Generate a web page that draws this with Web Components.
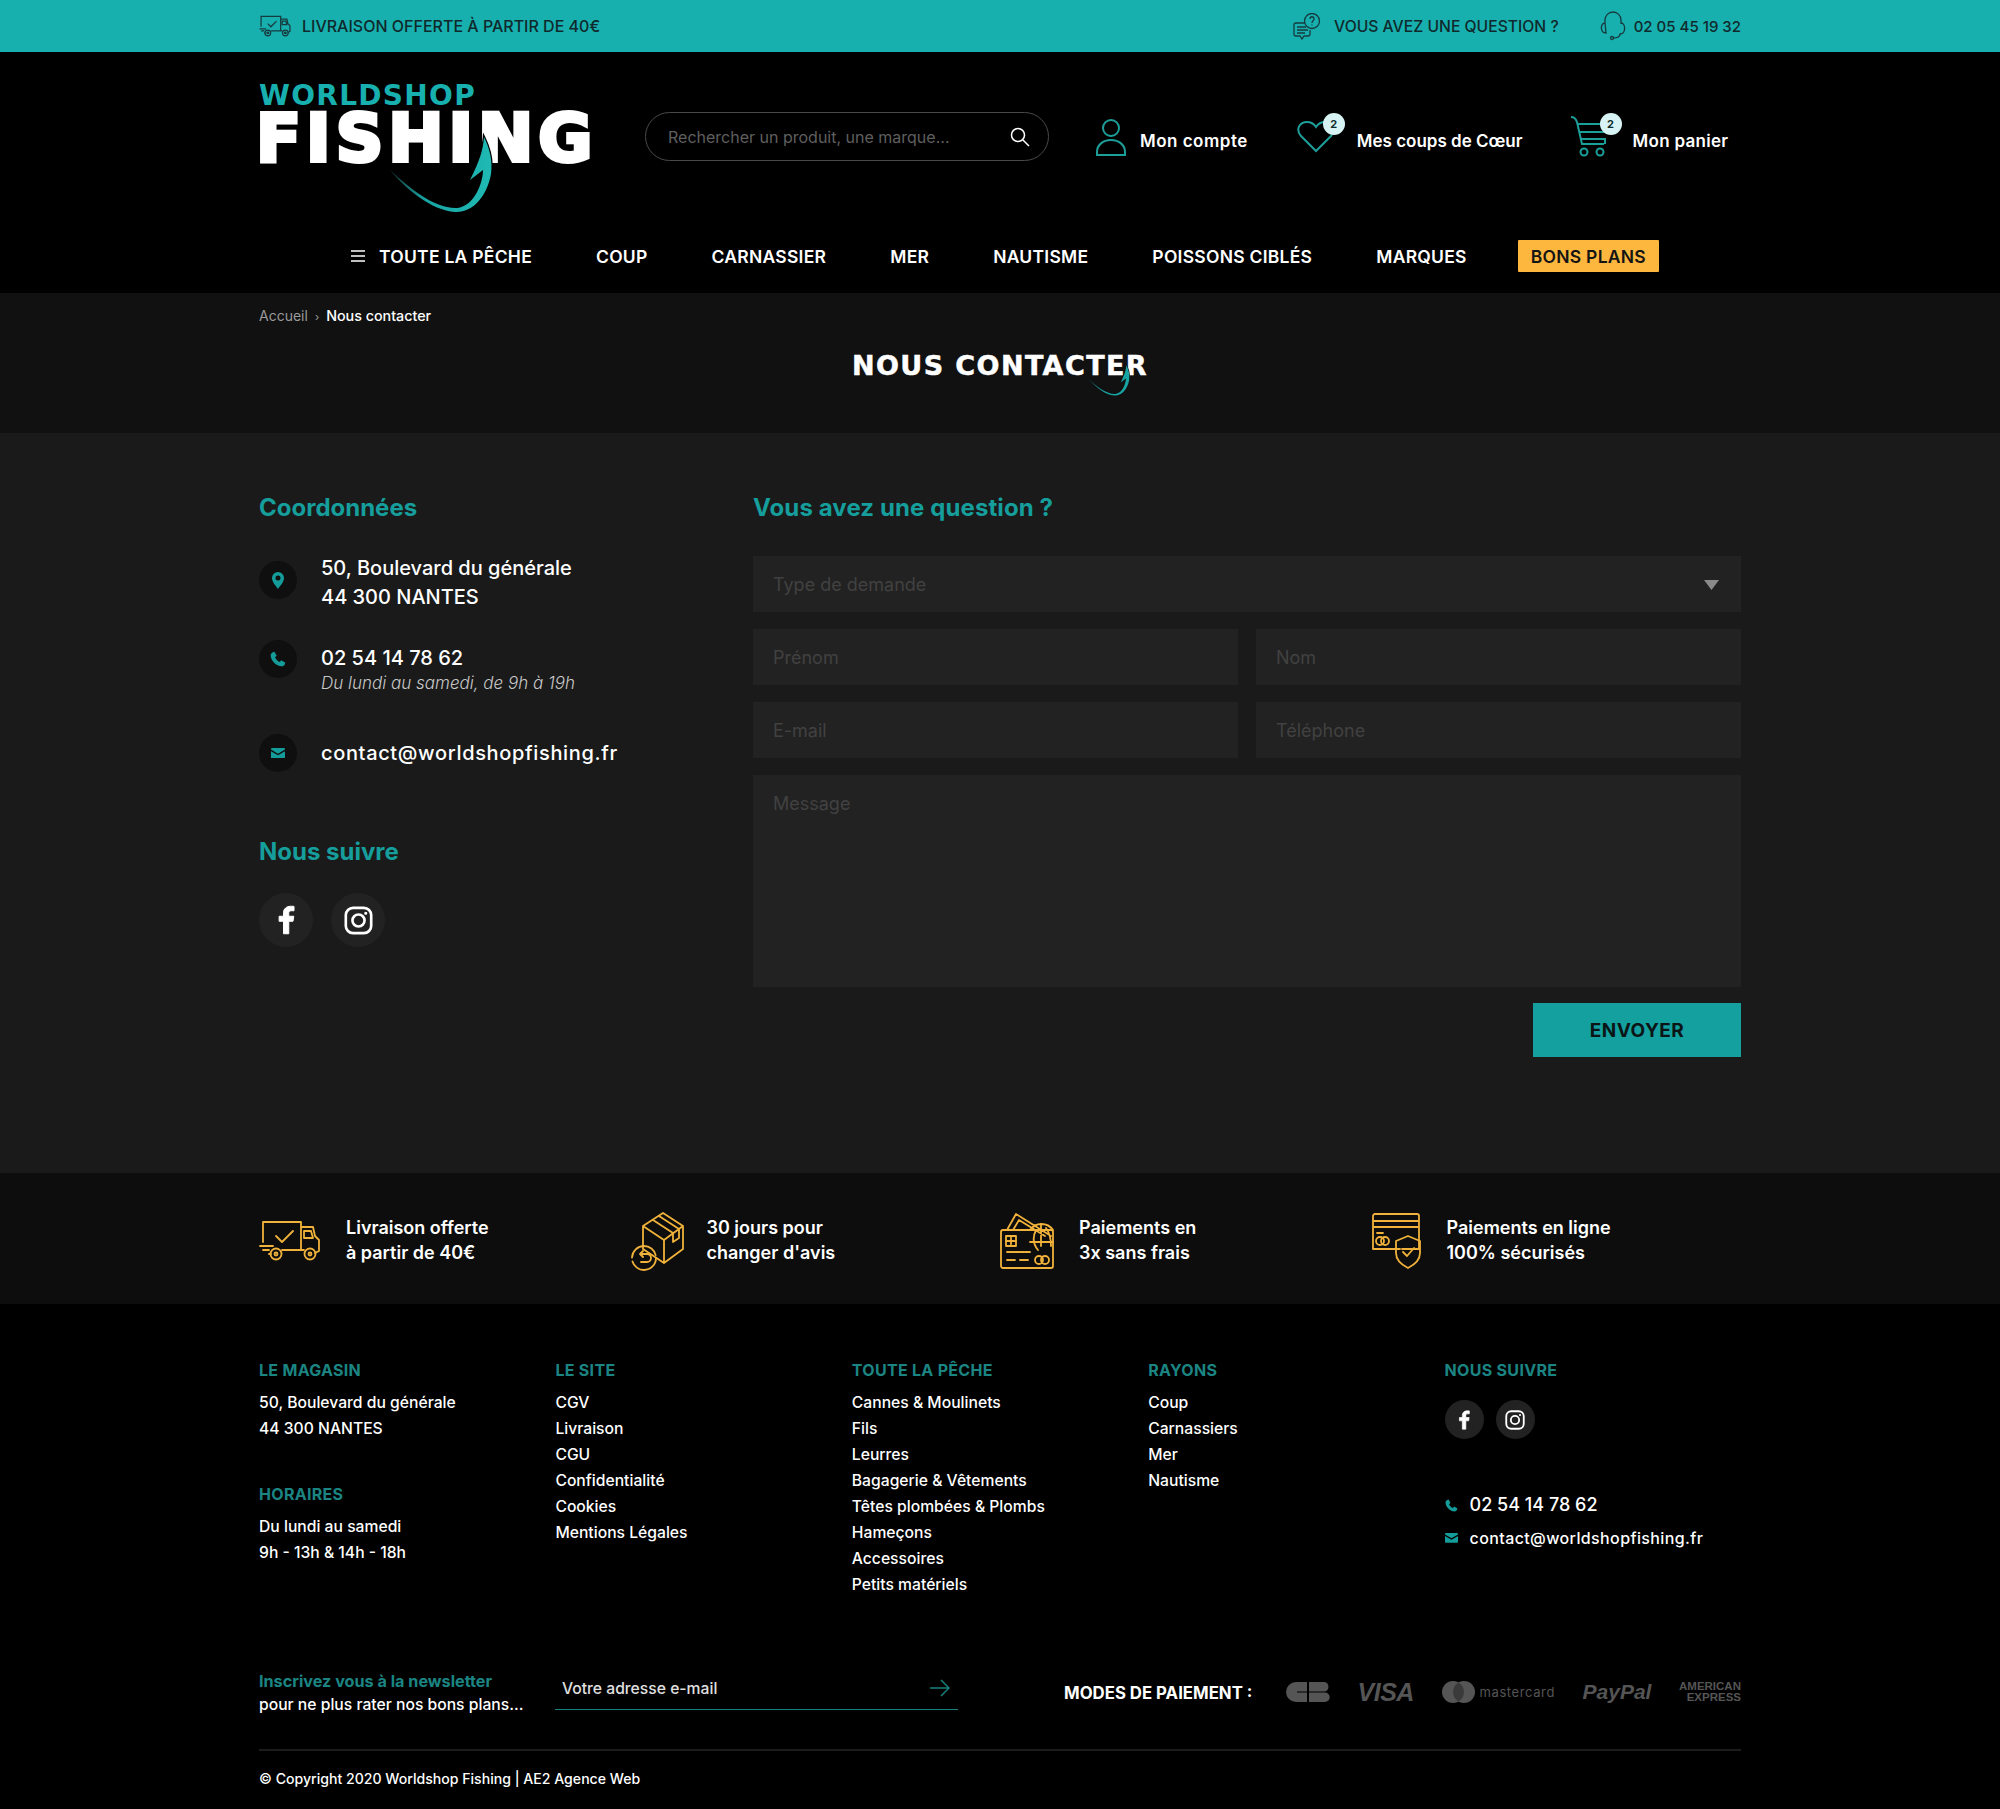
<!DOCTYPE html>
<html lang="fr"><head><meta charset="utf-8"><title>Nous contacter</title>
<style>
html,body{margin:0;padding:0;background:#000}
body{font-family:Inter,"Open Sans",sans-serif;color:#fff;width:2000px}
x-page{display:block}
</style></head><body>
<x-page></x-page>
<script>
const def=(n,html)=>customElements.define(n,class extends HTMLElement{constructor(){super();this.attachShadow({mode:'open'}).innerHTML=html}});
const gold=(vb,w,h,b)=>`<svg width="${w}" height="${h}" viewBox="${vb}" fill="none" stroke="#f0b23a" stroke-width="1.8" stroke-linecap="round" stroke-linejoin="round">${b}</svg>`;
const truckP=`<path d="M8 28V8h38v28H27M16 40h-2M46 13h12l2 9 4 4v11l-4 2M46 36h3M5 32h13M8 36h6M21 22l6 6 11-11M49 17h7l2 7H49z"/><circle cx="21" cy="40" r="5.500"/><circle cx="21" cy="40" r="1.500"/><circle cx="55" cy="40" r="5.500"/><circle cx="55" cy="40" r="1.500"/>`;
const box=`<path d="M33 2 53 15v23L34 52 13 38V15zM13 15l21 14 19-14M34 29v23M23 9l20 13v9l6-4v-9L29 5"/><circle cx="14" cy="47" r="12" stroke-dasharray="34 4"/><path d="M10 43h7a4 4 0 0 1 0 8h-6M10 43l3-3M10 43l3 3"/>`;
const cards=`<rect x="1" y="18" width="52" height="38" rx="2"/><path d="M7 18 16 2l35 22M13 18l6-10 26 16M30 18a14 14 0 0 1 23 0M41 12v22M30 30h23M36 18c-4 8-3 14 2 20M46 16c3 4 5 10 5 18"/><rect x="6" y="24" width="10" height="10"/><path d="M11 24v10M6 29h10M7 40h24M7 48h9M20 48h9" stroke-dasharray="2 1"/><circle cx="39" cy="48" r="4"/><circle cx="45" cy="48" r="4"/>`;
const shield=`<path d="M4 1h42a2 2 0 0 1 2 2v33H31M2 36V3a2 2 0 0 1 2-2M2 8h46M2 14h46M2 36h27M6 20h6"/><circle cx="9" cy="28" r="4"/><circle cx="14" cy="28" r="4"/><path d="M37 23 49 28v12c0 8-6 12-12 15-6-3-12-7-12-15V28zM32 39l4 4 7-8"/>`;
const fb=s=>`<svg width="${s}" height="${s}" viewBox="0 0 24 24" fill="#fff" stroke="#fff" stroke-width=".8"><path d="M14.200 23v-10h3.400l.6-4h-4V6.600c0-1.200.4-2 2-2h2.200V1.100C17.900 1 16.800 1 15.700 1 12.600 1 10 2.900 10 6.200V9H6.500v4H10v10z"/></svg>`;
const ig=s=>`<svg width="${s}" height="${s}" viewBox="0 0 24 24" fill="none" stroke="#fff" stroke-width="2.200"><rect x="1.500" y="1.500" width="21" height="21" rx="6"/><circle cx="12" cy="12" r="5"/><circle cx="18" cy="6" r=".8" fill="#fff" stroke-width="1"/></svg>`;
const pin=`<svg width="12" height="17" viewBox="0 0 12 17"><path fill-rule="evenodd" fill="#149c9a" d="M6 0a6 6 0 0 1 6 6c0 4-4 8-6 11C4 14 0 10 0 6a6 6 0 0 1 6-6zm0 3.500a2.500 2.500 0 1 0 0 5 2.500 2.500 0 0 0 0-5z"/></svg>`;
const phone=(s,c)=>`<svg width="${s}" height="${s}" viewBox="0 0 24 24"><path fill="${c}" d="M6.600 1 10 7 7.600 9.500c1 3 3.800 5.900 6.900 7L17 14l6 3.500c-.6 3.300-3 5.500-5.500 5.500C9.500 23 1 14.500 1 6.500 1 4 3.300 1.600 6.600 1z"/></svg>`;
const mail=(w,c)=>`<svg width="${w}" height="${w*.75}" viewBox="0 0 16 12"><path fill="${c}" d="M0 1.200A1.200 1.200 0 0 1 1.200 0h13.600A1.200 1.200 0 0 1 16 1.200v.6L8 6.500 0 1.800zM0 3.600l8 4.700 8-4.700v7.200a1.200 1.200 0 0 1-1.200 1.200H1.200A1.200 1.200 0 0 1 0 10.800z"/></svg>`;
const hook=`<path d="M131 88C148 108 172 128 196 130C214 131 228 114 232 92C234 78 230 65 225 55C224 68 221 78 211 98L224 88C224 100 216 124 198 126C176 127 150 106 131 88Z"`;

def('x-topbar',`<style>
:host{display:block;background:#17b0ae;height:52px;color:#10292c;font-size:16px;font-weight:500}
.w{width:1482px;margin:0 auto;height:52px;display:flex;align-items:center}
span{white-space:nowrap}
.g{flex:1}
svg{flex:none}
</style><div class="w">
<svg width="32" height="22" viewBox="4 6 62 41" fill="none" stroke="#173a3e" stroke-width="2.400">${truckP}</svg>
<span style="margin-left:11px">LIVRAISON OFFERTE À PARTIR DE 40€</span><div class="g"></div>
<svg width="28" height="27" viewBox="0 0 28 27" fill="none" stroke="#173a3e" stroke-width="1.300"><circle cx="19" cy="8" r="7.500"/><path d="M17 6c0-3 4-3 4 0 0 2-2 1.500-2 4M19 11.500v1M12 10H3a2 2 0 0 0-2 2v9a2 2 0 0 0 2 2h4l2 3 2-3h4a2 2 0 0 0 2-2v-4M4 14h9M4 17h11M4 20h8"/></svg>
<span style="margin-left:13px;font-size:15.700px">VOUS AVEZ UNE QUESTION ?</span>
<svg style="margin-left:41px" width="26" height="30" viewBox="0 0 26 30" fill="none" stroke="#173a3e" stroke-width="1.300"><path d="M5 13V9a8 8 0 0 1 16 0v4M5 12c-5 0-5 10 1 10l-1-10zM21 12c5 0 5 11-1 11 0 3-4 4-7 4"/><circle cx="12" cy="27" r="1.500"/></svg>
<span style="margin-left:8px;font-size:15px">02 05 45 19 32</span></div>`);

def('x-logo',`<style>
:host{display:block;position:relative;width:332px;height:130px;font-family:"DejaVu Sans",sans-serif;font-weight:700;line-height:1}
.a{color:#17b0ae;font-size:28px;letter-spacing:1.300px;height:31px;line-height:27px;white-space:nowrap}
.b{color:#fff;font-size:66px;line-height:52px;height:52px;letter-spacing:5px;-webkit-text-stroke:4px #fff;white-space:nowrap;margin-left:-3px}
svg{position:absolute;left:0;top:0}
</style><div class="a">WORLDSHOP</div><div class="b">FISHING</div>
<svg width="332" height="132" viewBox="0 0 332 132"><defs><linearGradient id="h" x1="0" x2="1" y1="0" y2="0"><stop offset="0" stop-color="#173c3c"/><stop offset=".35" stop-color="#17a5a3"/><stop offset="1" stop-color="#20b9b4"/></linearGradient></defs>${hook} fill="url(#h)" stroke="#000" stroke-width="2.500" paint-order="stroke"/></svg>`);

def('x-search',`<style>
:host{display:flex;align-items:center;box-sizing:border-box;width:404px;height:49px;border:1.500px solid #4a4a4a;border-radius:25px;padding:0 18px 0 22px;color:#5f5f5f;font-size:16px}
div{flex:1;white-space:nowrap}
</style><div>Rechercher un produit, une marque...</div>
<svg width="20" height="20" viewBox="0 0 20 20" fill="none" stroke="#fff" stroke-width="1.500"><circle cx="8" cy="8" r="6.500"/><path d="m13 13 6 6"/></svg>`);

def('x-header',`<style>
:host{display:block;background:#000;height:241px}
.w{width:1482px;margin:0 auto;padding-top:30px;display:flex;align-items:flex-start}
.r{display:flex;align-items:center;margin-top:30px}
.i{display:flex;align-items:center;position:relative;height:40px;font-size:17px;font-weight:600;white-space:nowrap;padding-top:8px;box-sizing:border-box}
.i svg{position:absolute;left:0}
.badge{position:absolute;width:22px;height:22px;border-radius:50%;background:#d8f3f3;color:#0c2a2c;font-size:11px;font-weight:700;display:flex;align-items:center;justify-content:center}
nav{width:1482px;margin:-2px auto 0;box-sizing:border-box;padding:30px 0 0 92px;display:flex;align-items:center;height:62px;gap:64px;font-size:17.500px;letter-spacing:.26px;font-weight:600;white-space:nowrap}
nav a{display:flex;align-items:center;gap:14px}
nav b{font-weight:600;background:#fdb73e;color:#141414;padding:0 13px;height:32px;display:flex;align-items:center;margin-left:-13px;border-radius:1px}
</style>
<div class="w"><x-logo></x-logo>
<div class="r" style="margin-left:54px"><x-search></x-search>
<div class="i" style="margin-left:45px;padding-left:46px;letter-spacing:.5px"><svg style="top:0" width="32" height="40" viewBox="0 0 32 40" fill="none" stroke="#1d9f99" stroke-width="2"><circle cx="17" cy="11" r="8"/><path d="M3 38v-3c0-7 6-12 14-12s14 5 14 12v3z"/></svg>Mon compte</div>
<div class="i" style="margin-left:49px;padding-left:60px"><svg style="top:3px" width="38" height="33" viewBox="0 0 38 33" fill="none" stroke="#1d9f99" stroke-width="2"><path d="M19 31 4 16C-2 9 3 2 10 2c4 0 7 2 9 5 2-3 5-5 9-5 7 0 12 7 6 14z"/></svg><div class="badge" style="left:26px;top:-4px">2</div>Mes coups de Cœur</div>
<div class="i" style="margin-left:47px;padding-left:63px;letter-spacing:.3px"><svg style="top:-2px" width="40" height="42" viewBox="0 0 40 42" fill="none" stroke="#1d9f99" stroke-width="2"><path d="M1 2c3 0 5 2 6 5l5 22h22M8 9h28v8M10 17h26M11 24h24v5"/><circle cx="14" cy="37" r="3.500"/><circle cx="30" cy="37" r="3.500"/></svg><div class="badge" style="left:30px;top:-4px">2</div>Mon panier</div>
</div></div>
<nav><a><svg width="14" height="12" viewBox="0 0 14 12" stroke="#fff" stroke-width="1.300"><path d="M0 1h14M0 6h14M0 11h14"/></svg>TOUTE LA PÊCHE</a><a>COUP</a><a>CARNASSIER</a><a>MER</a><a>NAUTISME</a><a>POISSONS CIBLÉS</a><a>MARQUES</a><b>BONS PLANS</b></nav>`);

def('x-title',`<style>
:host{display:block;background:#111;height:140px}
.w{width:1482px;margin:0 auto;position:relative}
.c{font-size:14px;line-height:20px;padding-top:13px;color:#9a9a9a;white-space:nowrap}
.c b{font-weight:500;color:#fff;font-size:14.300px}.c i{font-style:normal;margin:0 7px;font-size:11px}
h1{margin:24px 0 0;text-align:center;font:700 27px/30px "DejaVu Sans",sans-serif;letter-spacing:1.400px;-webkit-text-stroke:.5px #fff;color:#fff}
svg{position:absolute;left:829px;top:72px}
</style><div class="w"><div class="c">Accueil<i>›</i><b>Nous contacter</b></div><h1>NOUS CONTACTER</h1>
<svg width="42" height="31" viewBox="131 55 103 76"><defs><linearGradient id="t" x1="0" x2="1" y1="0" y2="0"><stop offset="0" stop-color="#173c3c"/><stop offset=".4" stop-color="#17a5a3"/></linearGradient></defs>${hook} fill="url(#t)" stroke="#111" stroke-width="3" paint-order="stroke"/></svg></div>`);

def('x-contact',`<style>
:host{display:block;width:494px}
h2{font-size:24px;font-weight:700;line-height:30px;color:#159e9c;margin:0;white-space:nowrap}
.ic{width:38px;height:38px;border-radius:50%;background:#0f0f0f;display:flex;align-items:center;justify-content:center;flex:none}
.row{display:flex;gap:24px;font-size:20px;font-weight:500;line-height:29px;white-space:nowrap}
small{display:block;font-size:17px;font-weight:300;font-style:italic;line-height:24px;color:#c8c8c8;margin-top:-2px}
.s{width:54px;height:54px;border-radius:50%;background:#222;display:flex;align-items:center;justify-content:center}
</style><h2>Coordonnées</h2>
<div class="row" style="margin-top:31px"><div class="ic" style="margin-top:7px">${pin}</div><div>50, Boulevard du générale<br>44 300 NANTES</div></div>
<div class="row" style="margin-top:36px"><div class="ic" style="margin-top:-8px">${phone(16,'#149c9a')}</div><div style="margin-top:-4px">02 54 14 78 62<small>Du lundi au samedi, de 9h à 19h</small></div></div>
<div class="row" style="margin-top:39px;align-items:center"><div class="ic">${mail(14,'#149c9a')}</div><div style="letter-spacing:.65px">contact@worldshopfishing.fr</div></div>
<h2 style="margin-top:65px">Nous suivre</h2>
<div style="display:flex;gap:18px;margin-top:26px"><div class="s">${fb(30)}</div><div class="s">${ig(29)}</div></div>`);

def('x-field',`<style>
:host{display:flex;box-sizing:border-box;background:#222;height:56px;padding:1px 20px 0;align-items:center;color:#414141;font-size:18px;position:relative}
</style><slot></slot>`);

def('x-form',`<style>
:host{display:block;width:988px}
h2{font-size:24px;font-weight:700;letter-spacing:.1px;line-height:30px;color:#159e9c;margin:0 0 33px}
.g{display:grid;grid-template-columns:1fr 1fr;gap:17px 18px}
.f{grid-column:1/3}
.t{height:212px;align-items:flex-start;padding-top:18px}
svg{position:absolute;right:22px;top:24px}
button{display:block;margin:16px 0 0 auto;width:208px;height:54px;border:0;background:#13a09f;color:#0b1516;font:700 19px Inter,sans-serif;letter-spacing:.5px}
</style><h2>Vous avez une question ?</h2>
<div class="g"><x-field class="f">Type de demande<svg width="15" height="10" viewBox="0 0 15 10"><path d="M0 0h15L7.500 10z" fill="#8a8a8a"/></svg></x-field>
<x-field>Prénom</x-field><x-field>Nom</x-field><x-field>E-mail</x-field><x-field>Téléphone</x-field><x-field class="f t">Message</x-field></div>
<button>ENVOYER</button>`);

def('x-main',`<style>
:host{display:block;background:#1a1a1a;height:740px;box-sizing:border-box;padding-top:60px}
.w{width:1482px;margin:0 auto;display:flex}
</style><div class="w"><x-contact></x-contact><x-form></x-form></div>`);

def('x-benefits',`<style>
:host{display:block;background:#0d0d0d;height:131px}
.w{width:1482px;margin:0 auto;height:131px;display:grid;grid-template-columns:repeat(4,1fr);align-items:center}
.p{display:flex;align-items:center;font-size:18px;font-weight:600;line-height:24.500px;white-space:nowrap;margin-top:4px}
svg{flex:none}
</style><div class="w">
<div class="p">${gold('4 6 62 41',62,41,truckP)}<span style="margin-left:25px">Livraison offerte<br>à partir de 40€</span></div>
<div class="p">${gold('0 0 55 60',55,60,box)}<span style="margin-left:22px">30 jours pour<br>changer d'avis</span></div>
<div class="p">${gold('0 0 54 58',54,58,cards)}<span style="margin-left:25px">Paiements en<br>3x sans frais</span></div>
<div class="p">${gold('0 0 50 56',50,56,shield)}<span style="margin-left:26px">Paiements en ligne<br>100% sécurisés</span></div>
</div>`);

def('x-footer',`<style>
:host{display:block;background:#000;height:505px;box-sizing:border-box;padding-top:56px;font-size:15.700px;font-weight:500}
.w{width:1482px;margin:0 auto}
.cols{display:grid;grid-template-columns:repeat(5,1fr);height:237px;line-height:26px;white-space:nowrap}
h4{margin:0 0 10px;font-size:16px;letter-spacing:.3px;line-height:20px;font-weight:700;color:#1b8583}
.s{width:39px;height:39px;border-radius:50%;background:#222;display:flex;align-items:center;justify-content:center}
.tel{display:flex;align-items:center;gap:12px;font-size:18px;line-height:26px}
.nl{display:flex;align-items:flex-start;margin-top:73px;height:41px}
.nl .a{width:296px;line-height:23px;white-space:nowrap;flex:none}
.nl .a b{color:#1b8583;font-weight:700;font-size:16.200px;display:block}
.in{width:403px;box-sizing:border-box;height:40px;border-bottom:1.500px solid #17807e;display:flex;align-items:center;justify-content:space-between;padding:0 8px 3px 7px;color:#e0e0e0;flex:none}
.m{font-size:16.800px;font-weight:700;margin-left:106px;white-space:nowrap;margin-top:13px;flex:none}
.pay{display:flex;align-items:center;color:#555;white-space:nowrap;margin-left:auto;margin-top:2px;height:40px;flex:none;width:455px;justify-content:space-between}
hr{border:0;height:2px;background:#1c1c1c;margin:38px 0 0}
.cp{font-size:14.100px;line-height:20px;margin-top:18px}
</style><div class="w"><div class="cols">
<div><h4>LE MAGASIN</h4>50, Boulevard du générale<br>44 300 NANTES<h4 style="margin-top:42px">HORAIRES</h4><div style="margin-top:10px">Du lundi au samedi<br>9h - 13h &amp; 14h - 18h</div></div>
<div><h4>LE SITE</h4>CGV<br>Livraison<br>CGU<br>Confidentialité<br>Cookies<br>Mentions Légales</div>
<div><h4>TOUTE LA PÊCHE</h4>Cannes &amp; Moulinets<br>Fils<br>Leurres<br>Bagagerie &amp; Vêtements<br>Têtes plombées &amp; Plombs<br>Hameçons<br>Accessoires<br>Petits matériels</div>
<div><h4>RAYONS</h4>Coup<br>Carnassiers<br>Mer<br>Nautisme</div>
<div><h4>NOUS SUIVRE</h4><div style="display:flex;gap:12px;margin-top:20px"><div class="s">${fb(20)}</div><div class="s">${ig(20)}</div></div>
<div class="tel" style="margin-top:53px">${phone(13,'#149c9a')}<span>02 54 14 78 62</span></div><div class="tel" style="margin-top:7px;font-size:16px;letter-spacing:.38px">${mail(13,'#149c9a')}<span>contact@worldshopfishing.fr</span></div></div>
</div>
<div class="nl"><div class="a"><b>Inscrivez vous à la newsletter</b>pour ne plus rater nos bons plans...</div>
<div class="in"><span>Votre adresse e-mail</span><svg width="20" height="18" viewBox="0 0 20 18" fill="none" stroke="#17807e" stroke-width="1.500"><path d="M0 9h19M11 1l8 8-8 8"/></svg></div>
<div class="m">MODES DE PAIEMENT :</div>
<div class="pay">
<svg width="44" height="20" viewBox="0 0 44 20"><path fill="#555" d="M21 0H10a10 10 0 0 0 0 20h11v-9.500H11v-1h10zM23 0h16a5 5 0 0 1 0 9.500H23zM23 10.500h16a4.700 4.700 0 0 1 0 9.500H23z"/></svg>
<span style="font:italic 700 25px 'Liberation Sans',sans-serif;letter-spacing:-.5px">VISA</span>
<span style="display:flex;align-items:center;gap:5px;font-size:13px;font-weight:400;letter-spacing:.6px"><svg width="33" height="22" viewBox="0 0 33 22"><circle cx="11" cy="11" r="11" fill="#555"/><circle cx="22" cy="11" r="11" fill="#555"/><path d="M16.500 1.500a11 11 0 0 1 0 19 11 11 0 0 1 0-19z" fill="#3a3a3a"/></svg>mastercard</span>
<span style="font:italic 700 21px 'Liberation Sans',sans-serif">PayPal</span>
<span style="font:700 11.500px/11px 'Liberation Sans',sans-serif;text-align:right">AMERICAN<br>EXPRESS</span>
</div></div>
<hr><div class="cp">© Copyright 2020 Worldshop Fishing | AE2 Agence Web</div></div>`);

def('x-page',`<style>:host{display:block}</style><x-topbar></x-topbar><x-header></x-header><x-title></x-title><x-main></x-main><x-benefits></x-benefits><x-footer></x-footer>`);
</script></body></html>
